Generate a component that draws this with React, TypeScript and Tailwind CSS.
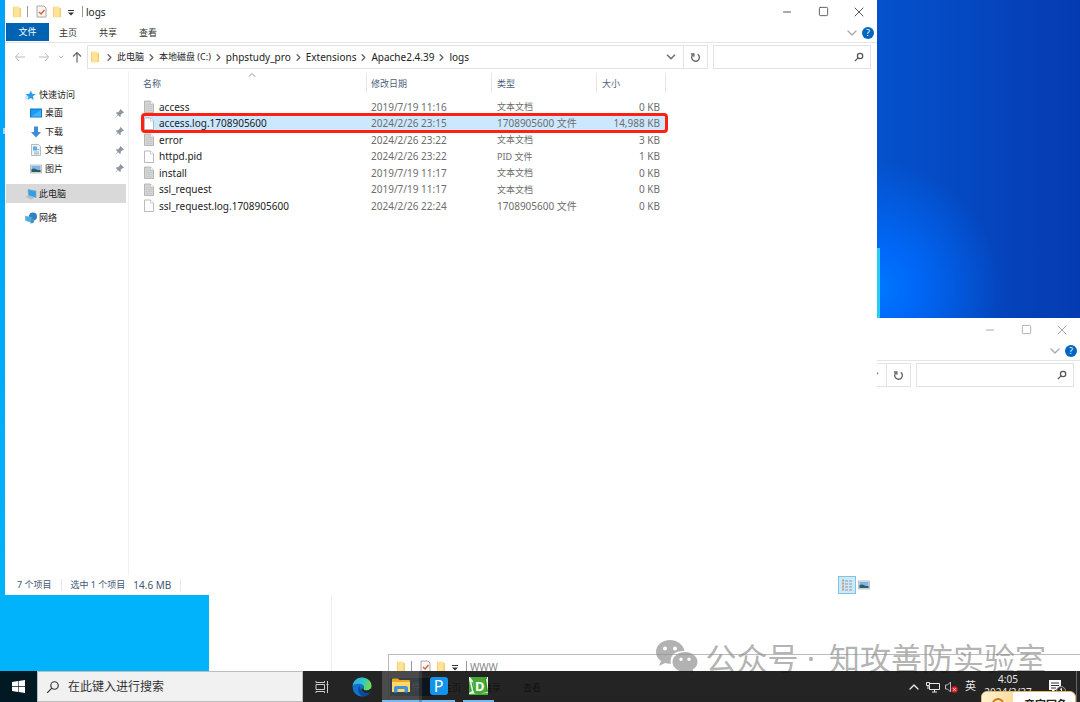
import type { ReactNode } from 'react';
import { ChevronDown, ChevronRight, ChevronUp, Minus, Square, X } from 'lucide-react';

const FolderIcon = () => (
  <svg viewBox="0 0 8 12" className="w-2 h-3 shrink-0">
    <path d="M0 1h4l1 1h3v9H0z" fill="#f5cf6b" />
    <path d="M1 0.500h5.500v9L5 11.500H1z" fill="#ffe39a" />
  </svg>
);

const CheckDocIcon = () => (
  <svg viewBox="0 0 11 13" className="w-[11px] h-[13px] shrink-0">
    <path d="M1 1h7l2 2v9H1z" fill="#f7f7f7" stroke="#a8a8a8" />
    <path d="M3 7l2 2 3.500-4" fill="none" stroke="#e4602c" strokeWidth="1.500" />
  </svg>
);

const FileIcon = ({ text }: { text: boolean }) => (
  <svg viewBox="0 0 10 13" className="w-[10px] h-[13px] shrink-0">
    <path d="M.5 1h6l3 3v8.500h-9z" fill={text ? '#d4d4d4' : '#fdfdfd'} stroke="#a9a9a9" strokeWidth=".8" />
    {text && <path d="M2 4.500h6M2 6.500h6M2 8.500h6M2 10.500h6" stroke="#c4c4c4" strokeWidth=".7" />}
    <path d="M6.500 1v3h3" fill="#fff" stroke="#b5b5b5" strokeWidth=".6" />
  </svg>
);

const PinIcon = () => (
  <svg viewBox="0 0 10 10" className="w-[9px] h-[9px] shrink-0">
    <path d="M6 0l4 4-1 .8-.8-.2L6.300 6.500l.1 1.700-.8.800L3.500 6.900.3 9.800.1 9.600l2.900-3.200L1 4.400l.8-.8 1.700.1L5.400 1.800 5.200 1z" fill="#8e979f" />
  </svg>
);

const SearchIcon = ({ className }: { className: string }) => (
  <svg viewBox="0 0 12 12" className={className} fill="none" stroke="currentColor">
    <circle cx="7.300" cy="4.700" r="3.200" />
    <path d="M5 7L1 11" />
  </svg>
);

const RefreshIcon = () => (
  <svg viewBox="0 0 12 12" className="w-[11px] h-[11px]" fill="none" stroke="currentColor" strokeWidth="1.500">
    <path d="M8.500 2.500A4.200 4.200 0 1 1 3 3" />
    <path d="M1 2.200h3.200v3" />
  </svg>
);

const HelpIcon = () => (
  <span className="flex items-center justify-center w-3 h-3 rounded-full bg-[#0067c0] text-white text-[9px] leading-none">?</span>
);

const StarIcon = () => (
  <svg viewBox="0 0 12 12" className="w-[11px] h-[11px]">
    <path d="M6.500.5l1.300 3.700 4 .3-3.200 2.400.9 4.100-3.400-2.300-3.300 2 1-3.700L.5 4.500l4.200-.3z" fill="#2b9cf0" />
    <path d="M0 8l3-1M.5 10l3-1.500" stroke="#7cc3f7" strokeWidth=".8" />
  </svg>
);

const DesktopIcon = () => (
  <svg viewBox="0 0 12 10" className="w-3 h-[10px]">
    <rect x=".5" y="1" width="11" height="8" fill="#1a9bf5" stroke="#0b78c8" />
    <path d="M1 8.500L11 2v6.500z" fill="#3fb4ff" />
  </svg>
);

const DownloadIcon = () => (
  <svg viewBox="0 0 12 12" className="w-3 h-3">
    <path d="M4 .5h4V6h3L6 11.500 1 6h3z" fill="#3b8edb" />
  </svg>
);

const DocumentIcon = () => (
  <svg viewBox="0 0 12 12" className="w-3 h-3">
    <path d="M1.500.5h7l2 2v9h-9z" fill="#f1f4f6" stroke="#a3acb3" strokeWidth=".8" />
    <path d="M3 2.500h4v4H3z" fill="#5bb0e5" />
    <path d="M7 5.500h2.500M4 8h5M4 9.800h5" stroke="#6aa6cc" strokeWidth=".8" />
  </svg>
);

const PictureIcon = () => (
  <svg viewBox="0 0 12 10" className="w-3 h-[10px]">
    <rect x=".5" y="1" width="11" height="8" fill="#e4e8eb" stroke="#b0b6ba" strokeWidth=".8" />
    <rect x="1.500" y="2" width="9" height="6" fill="#7fb4ea" />
    <path d="M1.500 5l3-.5 3 1.500 3 0v2h-9z" fill="#2f5d5e" />
  </svg>
);

const ComputerIcon = () => (
  <svg viewBox="0 0 12 12" className="w-3 h-3">
    <path d="M3 1.500l8 1.500v6.500L3.500 7.500z" fill="#2f9fe8" stroke="#7da7c4" strokeWidth=".7" />
    <path d="M.5 9L3 7.500l6 2-2.500 2z" fill="#b4bdc4" />
  </svg>
);

const NetworkIcon = () => (
  <svg viewBox="0 0 12 12" className="w-3 h-3">
    <circle cx="8" cy="4.500" r="4" fill="#2d83c5" />
    <path d="M.5 4l6 1.500v5l-6-2z" fill="#45aeea" stroke="#86a9bf" strokeWidth=".6" />
    <path d="M6.500 6l3 1-1 4-3 .5z" fill="#4a8fc0" />
  </svg>
);

type WindowProps = {
  title?: string;
  inactive?: boolean;
  tabs?: string[];
  path?: string[];
  className: string;
  children?: ReactNode;
};

const ExplorerWindow = ({ title, inactive, tabs = [], path = [], className, children }: WindowProps) => {
  const buttonTone = inactive ? 'text-[#aaa]' : 'text-[#555]';

  return (
    <section className={`absolute flex flex-col bg-white ${className}`}>
      {/* Title bar */}
      <header className="flex items-center justify-between h-[23px] shrink-0 pl-2">
        <div className="flex items-center">
          {title && (
            <>
              <FolderIcon />
              <span className="w-px h-[11px] ml-[6px] mr-2 bg-[#999]" />
              <CheckDocIcon />
              <span className="ml-[6px] mr-[7px]"><FolderIcon /></span>
              <svg viewBox="0 0 6 6" className="w-[6px] h-[6px] mt-[3px] mr-2 text-[#333]">
                <path d="M0 .5h6" stroke="currentColor" />
                <path d="M0 2.500h6L3 5.500z" fill="currentColor" />
              </svg>
              <span className="w-px h-[11px] mr-[3px] bg-[#999]" />
              <h1 className={`text-[10px] leading-none ${inactive ? 'text-[#888]' : 'text-[#222]'}`}>{title}</h1>
            </>
          )}
        </div>
        <div className={`flex h-full ${buttonTone}`}>
          <button aria-label="最小化" className="flex items-center justify-center w-9"><Minus className="w-3 h-3" strokeWidth={2} /></button>
          <button aria-label="最大化" className="flex items-center justify-center w-9"><Square className="w-[11px] h-[11px]" strokeWidth={2} /></button>
          <button aria-label="关闭" className="flex items-center justify-center w-9"><X className="w-4 h-4" strokeWidth={1.500} /></button>
        </div>
      </header>

      {/* Ribbon */}
      <div className="flex items-center justify-between h-5 shrink-0 border-b border-[#e5e5e5] pr-[3px]">
        <div role="tablist" className="flex h-full pl-px pb-px text-[9px] text-[#333]">
          {tabs.map((tab, index) => (
            <button
              key={tab}
              role="tab"
              aria-selected={index === 0}
              className={index === 0 ? 'w-[43px] bg-[#0063b1] text-white' : 'w-10 pr-[2px] pt-px'}
            >
              {tab}
            </button>
          ))}
        </div>
        <div className="flex items-center gap-[2px]">
          <ChevronDown className="w-4 h-4 text-[#aaa]" strokeWidth={2} />
          <HelpIcon />
        </div>
      </div>

      {/* Address bar */}
      <div className="flex items-center gap-[5px] h-7 shrink-0 pr-[6px] text-[#555]">
        <div className="flex items-center w-[77px] shrink-0 pl-[9px] text-[#bbb]">
          {path.length > 0 && (
            <>
              <button aria-label="后退">
                <svg viewBox="0 0 12 10" className="w-3 h-[10px]" fill="none" stroke="currentColor"><path d="M11 5H1.500M5 1L1.500 5 5 9" /></svg>
              </button>
              <button aria-label="前进" className="ml-3">
                <svg viewBox="0 0 12 10" className="w-3 h-[10px]" fill="none" stroke="currentColor"><path d="M1 5h9.500M7 1l3.500 4L7 9" /></svg>
              </button>
              <ChevronDown className="w-2 h-2 ml-[7px]" strokeWidth={3} />
              <button aria-label="上移" className="ml-[7px] text-[#666]">
                <svg viewBox="0 0 10 12" className="w-[10px] h-3" fill="none" stroke="currentColor" strokeWidth="1.200"><path d="M5 11.500V1.500M1 5.500l4-4 4 4" /></svg>
              </button>
            </>
          )}
        </div>
        <div className="flex items-center flex-1 h-6 border border-[#e3e3e3] text-[10px] text-[#222]">
          {path.length > 0 && <span className="mx-[3px]"><FolderIcon /></span>}
          {path.map((part) => (
            <span key={part} className="flex items-center whitespace-nowrap">
              <ChevronRight className="w-[11px] h-[11px] mx-[2px] text-[#666]" strokeWidth={3} />
              <a href="#" className={/^[\x00-\x7f]+$/.test(part) ? '' : 'text-[9px]'}>{part}</a>
            </span>
          ))}
          <span className="flex-1" />
          <ChevronDown className="w-[14px] h-[14px] mr-[5px] text-[#777]" strokeWidth={3} />
          <button aria-label="刷新" className="flex items-center justify-center w-6 h-full border-l border-[#e3e3e3] text-[#666]">
            <RefreshIcon />
          </button>
        </div>
        <div className="flex items-center w-[158px] h-6 shrink-0 border border-[#e3e3e3]">
          <input aria-label="搜索" className="flex-1 min-w-0 h-full outline-none text-[10px]" />
          <SearchIcon className="w-[10px] h-[10px] mr-[6px] stroke-[1.5]" />
        </div>
      </div>
      {children}
    </section>
  );
};

const quickAccess = [
  { name: '桌面', icon: <DesktopIcon /> },
  { name: '下载', icon: <DownloadIcon /> },
  { name: '文档', icon: <DocumentIcon /> },
  { name: '图片', icon: <PictureIcon /> },
];

const files = [
  { name: 'access', date: '2019/7/19 11:16', type: '文本文档', size: '0 KB' },
  { name: 'access.log.1708905600', date: '2024/2/26 23:15', type: '1708905600 文件', size: '14,988 KB' },
  { name: 'error', date: '2024/2/26 23:22', type: '文本文档', size: '3 KB' },
  { name: 'httpd.pid', date: '2024/2/26 23:22', type: 'PID 文件', size: '1 KB' },
  { name: 'install', date: '2019/7/19 11:17', type: '文本文档', size: '0 KB' },
  { name: 'ssl_request', date: '2019/7/19 11:17', type: '文本文档', size: '0 KB' },
  { name: 'ssl_request.log.1708905600', date: '2024/2/26 22:24', type: '1708905600 文件', size: '0 KB' },
];

const NavPane = () => (
  <nav className="w-[123px] shrink-0 pt-[15px] pl-px pr-[2px] text-[9px] text-[#222]">
    <a href="#" className="flex items-center gap-[3px] h-[18px] pl-[19px]"><StarIcon />快速访问</a>
    <ul>
      {quickAccess.map((item) => (
        <li key={item.name} className="flex items-center justify-between odd:h-[18px] even:h-[19px] pl-6 pr-[2px]">
          <a href="#" className="flex items-center gap-[3px]">{item.icon}{item.name}</a>
          <PinIcon />
        </li>
      ))}
    </ul>
    <a href="#" className="flex items-center gap-[2px] h-[19px] mt-[6px] pl-[19px] bg-[#d9d9d9]"><ComputerIcon />此电脑</a>
    <a href="#" className="flex items-center gap-[2px] h-[18px] mt-[6px] pl-[19px]"><NetworkIcon />网络</a>
  </nav>
);

const FileTable = () => (
  <table className="w-[523px] mt-px table-fixed border-collapse text-[10px] leading-none text-[#6d6d6d] whitespace-nowrap">
    <thead>
      <tr className="h-[26px] text-left text-[9px] text-[#4c607a]">
        <th className="w-[224px] p-0 font-normal">
          <span className="flex items-center justify-between h-5 mb-1 border-r border-[#e5e5e5]">
            名称
            <ChevronUp className="w-3 h-3 mb-4 mr-[108px] text-[#999]" strokeWidth={2} />
          </span>
        </th>
        <th className="w-[125px] p-0 font-normal"><span className="flex items-center h-5 mb-1 pl-1 border-r border-[#e5e5e5]">修改日期</span></th>
        <th className="w-[105px] p-0 font-normal"><span className="flex items-center h-5 mb-1 pl-[5px] border-r border-[#e5e5e5]">类型</span></th>
        <th className="p-0 font-normal"><span className="flex items-center h-5 mb-1 pl-[5px] border-r border-[#e5e5e5]">大小</span></th>
      </tr>
    </thead>
    <tbody>
      {files.map((file) => {
        const selected = file.name === 'access.log.1708905600';
        return (
          <tr
            key={file.name}
            className={`odd:h-[17px] even:h-[16px] ${selected ? 'bg-[#cce8ff] outline-[3px] -outline-offset-1 outline-[#ff2013] rounded-[2px]' : ''}`}
          >
            <td className="p-0">
              <span className="flex items-center gap-[5px] pl-px text-[#222]">
                <FileIcon text={file.type === '文本文档'} />
                {file.name}
              </span>
            </td>
            <td className="p-0 pl-1">{file.date}</td>
            <td className={`p-0 pl-[5px] ${file.type.startsWith('1') ? '' : 'text-[9px]'}`}>{file.type}</td>
            <td className="p-0 pr-[6px] text-right">{file.size}</td>
          </tr>
        );
      })}
    </tbody>
  </table>
);

const StatusBar = () => (
  <footer className="flex items-center h-5 shrink-0 pl-3 pr-[7px] text-[9px] text-[#3f5674]">
    <span>7 个项目</span>
    <span className="w-px h-3 mx-[9px] bg-[#e8e8e8]" />
    <span>选中 1 个项目</span>
    <span className="ml-2 text-[10px]">14.6 MB</span>
    <span className="w-px h-3 mx-[9px] bg-[#e8e8e8]" />
    <div className="flex items-center gap-[2px] ml-auto">
      <button aria-label="详细信息" className="flex items-center justify-center w-[18px] h-[18px] border border-[#7cc4ea] bg-[#cde9f7]">
        <svg viewBox="0 0 12 12" className="w-3 h-3">
          <path d="M2 .5v11" stroke="#c39a86" strokeWidth="2" strokeDasharray="2 1" />
          <path d="M4 2h3M8 2h3M4 5h3M8 5h3M4 8h3M8 8h3M4 11h3M8 11h3" stroke="#8b9ba5" />
        </svg>
      </button>
      <button aria-label="大图标"><PictureIcon /></button>
    </div>
  </footer>
);

const Watermark = () => (
  <div className="absolute right-[34px] -bottom-[7px] flex items-center gap-2 h-10 text-[#888]/65 whitespace-nowrap">
    <svg viewBox="0 0 43 35" className="w-[43px] h-[35px] mb-1" fill="currentColor">
      <path fillRule="evenodd" d="M15 1C7 1 1 6 1 13c0 4 2 7 5 9l-2 5 6-3c2 .6 4 1 6 .8C14 16 21 11.500 29.500 12 28 5 22 1 15 1zM10 7.500a2 2 0 1 1 0 4 2 2 0 0 1 0-4zM20 7.500a2 2 0 1 1 0 4 2 2 0 0 1 0-4z" />
      <path fillRule="evenodd" d="M30 13c-7 0-12.500 4.500-12.500 10S23 33 30 33c1.500 0 3-.2 4.500-.7l4.500 2.500-1.300-4.300c3-2 4.800-4.500 4.800-7.500 0-5.500-5.500-10-12.500-10zM26 18.500a1.700 1.700 0 1 1 0 3.400 1.700 1.700 0 0 1 0-3.400zM34 18.500a1.700 1.700 0 1 1 0 3.400 1.700 1.700 0 0 1 0-3.400z" />
    </svg>
    <p className="text-[31px] leading-none">公众号 <span className="mr-[6px]">·</span> 知攻善防实验室</p>
  </div>
);

const EdgeIcon = () => (
  <svg viewBox="0 0 20 20" className="w-5 h-5">
    <defs>
      <linearGradient id="edgeTop" x1="0" y1="0" x2="1" y2=".3">
        <stop offset="0" stopColor="#2aa9e8" />
        <stop offset=".6" stopColor="#36c5c8" />
        <stop offset="1" stopColor="#6fdc4e" />
      </linearGradient>
    </defs>
    <circle cx="10" cy="10" r="9.500" fill="#1272c9" />
    <path d="M.6 9C1.300 3.800 5.200.5 10 .5c5.600 0 9.500 4 9.500 8 0 3-2.300 5-5.200 5-2.200 0-3-.9-2.600-1.700.9-1.400.6-4-2.700-4.800C5.500 6.200 2 7 .6 9z" fill="url(#edgeTop)" />
    <path d="M8 8.500c-3 2.500-2.500 8.500 3 11 3-.1 5.800-1.500 7.200-4-4.500 2-10.700 0-10.200-7z" fill="#0b4a98" />
    <path d="M11.700 11.800c-.5.800.4 1.700 2.600 1.700 1.800 0 3.300-.8 4.200-2l.8 1.500-1.500 2.500c-4 1.500-8 .3-8.500-4z" fill="#232323" />
  </svg>
);

const EditorIcon = () => (
  <svg viewBox="0 0 19 18" className="w-[19px] h-[18px]">
    <rect width="19" height="18" fill="#e4f4e0" />
    <path d="M0 3l3 11-3 2zM1 0h17v2L4 4zM4 4l13-2 2 13-11 2-3-1zM0 17l19-1v2H0z" fill="#45ab35" />
    <path d="M3 5l2 9M16 1l2 13" stroke="#2f9130" />
    <text x="6" y="14" fontSize="13" fontWeight="bold" fill="#fff">D</text>
  </svg>
);

const Taskbar = () => (
  <footer className="relative z-10 flex h-[31px] shrink-0 bg-[#0e0e0e]/91 text-white">
    <button aria-label="开始" className="flex items-center justify-center w-[37px] bg-[#001923]">
      <svg viewBox="0 0 13 13" className="w-[13px] h-[13px]" fill="#fff">
        <path d="M0 2l6-1v5H0zM6.600.9L13 0v6H6.600zM0 6.700h6v5.200l-6-1zM6.600 6.700H13V13l-6.400-1z" />
      </svg>
    </button>
    <label className="flex items-center gap-2 w-[266px] pl-2 border border-[#bdbdbd] bg-[#f1f1f1] text-[#333]">
      <SearchIcon className="w-[14px] h-[14px] shrink-0" />
      <input placeholder="在此键入进行搜索" aria-label="在此键入进行搜索" className="flex-1 min-w-0 h-full text-[12px] outline-none placeholder:text-[#333]" />
    </label>
    <button aria-label="任务视图" className="flex items-center justify-center w-[38px]">
      <svg viewBox="0 0 14 14" className="w-[14px] h-[14px]" fill="none" stroke="#ccc">
        <path d="M1 1v1.500h8.500V1M1 13v-1.500h8.500V13M1 4.500h8.500v5H1zM12.500 1v12M11.500 4.500h2" />
      </svg>
    </button>
    <button aria-label="Microsoft Edge" className="flex items-center justify-center w-[41px]"><EdgeIcon /></button>
    <button aria-label="文件资源管理器" className="flex items-center justify-center w-[37px] border-b-2 border-[#76b9ed] bg-white/18">
      <svg viewBox="0 0 18 15" className="w-[18px] h-[15px]">
        <path d="M0 1.500Q0 .5 1 .5h5l1.500 1.500H17q1 0 1 1V14H0z" fill="#e9a824" />
        <path d="M0 4h18v10H0z" fill="#ffd867" />
        <path d="M2 14.500V10q0-2 2-2h10q2 0 2 2v4.500h-3.500V11h-7v3.500z" fill="#3f93dc" />
      </svg>
    </button>
    <span className="w-[3px] border-b-2 border-[#5d8fb5] bg-white/10" />
    <button aria-label="phpStudy" className="flex items-center justify-center w-[33px] border-b-2 border-[#76b9ed]">
      <span className="flex items-center justify-center w-[18px] h-[18px] rounded-[3px] bg-[#1493ea] text-[16px] leading-none">P</span>
    </button>
    <button aria-label="D" className="flex items-center justify-center w-[31px] ml-2 border-b-2 border-[#76b9ed]">
      <EditorIcon />
    </button>

    {/* Tray */}
    <div className="flex items-center ml-auto text-[#e8e8e8]">
      <ChevronUp className="w-4 h-4" strokeWidth={2} />
      <svg viewBox="0 0 14 12" className="w-[14px] h-3 ml-1" fill="none" stroke="currentColor">
        <path d="M4 2.500h9.500v6H3.500V5M6 11h5M8.500 8.500V11M.5 1.500h3v3h-3zM2 4.500V8" />
      </svg>
      <svg viewBox="0 0 14 12" className="w-[14px] h-3 ml-[5px]">
        <path d="M.5 4h2l3-3v10l-3-3h-2z" fill="none" stroke="#bbb" />
        <circle cx="9.500" cy="8.500" r="3.200" fill="#e0202b" />
        <path d="M8.300 7.300l2.400 2.400M10.700 7.300L8.300 9.700" stroke="#fff" strokeWidth=".9" />
      </svg>
      <span className="ml-[6px] text-[11px]">英</span>
      <div className="flex flex-col items-center self-stretch w-[64px] pt-[2px] text-[10px] leading-[13px]">
        <time>4:05</time>
        <time>2024/2/27</time>
      </div>
      <svg viewBox="0 0 18 16" className="w-[18px] h-4 ml-2 mr-[10px]">
        <path d="M1 1h12v10H7l-3 3v-3H1z" fill="#fff" />
        <path d="M3 4h8M3 6.500h8M3 9h5" stroke="#333" />
        <circle cx="13" cy="12" r="4.500" fill="#333" stroke="#999" />
        <path d="M12 10.500l1.500-1V14" stroke="#fff" fill="none" />
      </svg>
      <span className="w-1 self-stretch border-l border-[#666]" />
    </div>

    {/* Popup rising over the clock */}
    <div className="absolute right-1 top-5 flex w-[95px] h-[26px] rounded-[6px] border border-[#e5b868] bg-white overflow-hidden text-[#222]">
      <span className="flex justify-center w-[31px] pt-[6px] bg-linear-to-r from-[#fff3d2] to-[#fbdc9b]">
        <span className="w-3 h-3 rounded-full border-2 border-[#c87a1a]" />
      </span>
      <span className="pt-[6px] pl-[11px] text-[11px] leading-[14px] font-bold">章宝回鱼</span>
    </div>
  </footer>
);

const App = () => (
  <div
    lang="zh-CN"
    className="flex flex-col h-screen overflow-hidden font-['Noto_Sans','Noto_Sans_CJK_SC',sans-serif] [background:linear-gradient(180deg,#00a2f8,#00b3fb_85%)_0_0/30%_100%_no-repeat,radial-gradient(circle_at_81%_41%,#0078ff_0,#0068f8_4%,transparent_13%),linear-gradient(90deg,#0452cc_81%,#053bb2_100%)]"
  >
    <main className="relative flex-1 min-h-0">
      <span className="absolute left-[3px] top-[128px] w-[2px] h-[6px] bg-white/60" />

      <ExplorerWindow inactive className="left-[209px] right-0 top-[318px] -bottom-[31px]">
        <div className="w-[123px] flex-1 border-r border-[#eee]" />
      </ExplorerWindow>

      <span className="absolute left-[877px] top-[248px] w-[3px] h-[70px] bg-[#27cdf5]" />

      <ExplorerWindow
        title="WWW"
        inactive
        tabs={['文件', '主页', '共享', '查看']}
        className="left-[388px] -right-[120px] top-[654px] -bottom-[31px] border-t border-l border-[#bbb] overflow-hidden"
      />

      <ExplorerWindow
        title="logs"
        tabs={['文件', '主页', '共享', '查看']}
        path={['此电脑', '本地磁盘 (C:)', 'phpstudy_pro', 'Extensions', 'Apache2.4.39', 'logs']}
        className="left-[5px] right-[203px] top-0 bottom-[76px]"
      >
        <div className="flex flex-1 min-h-0">
          <NavPane />
          <div className="flex-1 pl-[14px] border-l border-[#f0f0f0]">
            <FileTable />
          </div>
        </div>
        <StatusBar />
      </ExplorerWindow>

      <Watermark />
    </main>
    <Taskbar />
  </div>
);

export default App;
